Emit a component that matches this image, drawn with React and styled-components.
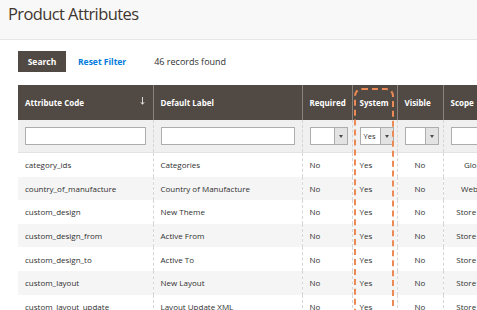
import React from "react";
import styled, { createGlobalStyle } from "styled-components";

const GlobalStyle = createGlobalStyle`
  html, body {
    margin: 0;
    padding: 0;
    background: #fff;
    overflow: hidden;
  }
  body {
    font-family: "Open Sans", "Liberation Sans", sans-serif;
    color: #303030;
    width: 477px;
    height: 310px;
  }
`;

const PageHeader = styled.div`
  height: 39px;
  background: #f8f8f8;
  border-bottom: 1px solid #e6e6e6;
  display: flex;
  align-items: center;
  padding-left: 8px;
`;

const Title = styled.h1`
  margin: 0;
  font-size: 16.5px;
  font-weight: 400;
  color: #41362f;
  letter-spacing: -0.6px;
  line-height: 1;
  margin-top: -10px;
`;

const Main = styled.div`
  width: 640px;
  padding-left: 18px;
`;

const Toolbar = styled.div`
  display: flex;
  align-items: center;
  margin-top: 11px;
  height: 21px;
  font-size: 8.5px;
`;

const SearchButton = styled.button`
  height: 21px;
  width: 48px;
  padding: 0;
  border: none;
  background: #514943;
  color: #fff;
  font-family: inherit;
  font-size: 8.5px;
  font-weight: 700;
`;

const ResetLink = styled.span`
  margin-left: 12px;
  color: #007bdb;
  font-weight: 700;
`;

const Records = styled.span`
  margin-left: 28px;
  font-size: 9px;
  color: #303030;
`;

const Spacer = styled.div`
  flex: 1;
`;

const RightBox = styled.div`
  width: 150px;
  height: 18px;
  border: 1px solid #adadad;
  background: #fff;
  margin-top: 1px;
`;

const TableWrap = styled.div`
  position: relative;
  margin-top: 13px;
`;

const Table = styled.table`
  border-collapse: collapse;
  table-layout: fixed;
  width: 622px;
  font-size: 8px;
`;

const HeadCell = styled.th`
  height: 35px;
  padding: 0 7px;
  background: #514943;
  color: #fff;
  font-weight: 700;
  text-align: left;
  border-left: 1px solid #8a827c;
  position: relative;
  &:first-child {
    border-left: none;
  }
`;

const SortArrow = styled.svg`
  position: absolute;
  right: 8px;
  top: 12px;
`;

const FilterCell = styled.td`
  height: 32px;
  padding: 0 7px;
  background: #f0f0f0;
  border-left: 1px dashed #d6d6d6;
  border-bottom: 1px solid #e3e3e3;
  &:first-child {
    border-left: none;
  }
`;

const TextInput = styled.div`
  height: 16px;
  border: 1px solid #adadad;
  background: #fff;
`;

const Select = styled.div`
  width: ${(p) => p.$w}px;
  height: 16px;
  border: 1px solid #adadad;
  background: #fff;
  display: flex;
  align-items: center;
`;

const SelectValue = styled.span`
  flex: 1;
  padding-left: 3px;
  font-size: 7.5px;
  color: #303030;
`;

const SelectArrow = styled.span`
  width: 12px;
  height: 100%;
  background: #e3e3e3;
  border-left: 1px solid #adadad;
  display: flex;
  align-items: center;
  justify-content: center;
  &::after {
    content: "";
    border-left: 2.5px solid transparent;
    border-right: 2.5px solid transparent;
    border-top: 3px solid #514943;
  }
`;

const Row = styled.tr`
  background: ${(p) => (p.$alt ? "#f5f5f5" : "#fff")};
`;

const Cell = styled.td`
  height: 23.6px;
  padding: 0 7px;
  text-align: ${(p) => p.$align || "left"};
  border-left: 1px dashed #d6d6d6;
  white-space: nowrap;
  overflow: hidden;
  &:first-child {
    border-left: none;
  }
`;

const Highlight = styled.div`
  position: absolute;
  left: 336px;
  top: 3px;
  width: 36px;
  height: 300px;
  border: 2px dashed #ec8a55;
  border-radius: 8px;
  pointer-events: none;
`;

const columns = [
  { title: "Attribute Code", width: 135 },
  { title: "Default Label", width: 149 },
  { title: "Required", width: 50 },
  { title: "System", width: 45 },
  { title: "Visible", width: 46 },
  { title: "Scope", width: 66 },
  { title: "Searchable", width: 131 },
];

const rows = [
  ["category_ids", "Categories", "No", "Yes", "No", "Global"],
  ["country_of_manufacture", "Country of Manufacture", "No", "Yes", "No", "Website"],
  ["custom_design", "New Theme", "No", "Yes", "No", "Store View"],
  ["custom_design_from", "Active From", "No", "Yes", "No", "Store View"],
  ["custom_design_to", "Active To", "No", "Yes", "No", "Store View"],
  ["custom_layout", "New Layout", "No", "Yes", "No", "Store View"],
  ["custom_layout_update", "Layout Update XML", "No", "Yes", "No", "Store View"],
];

export default function App() {
  return (
    <>
      <GlobalStyle />
      <PageHeader>
        <Title>Product Attributes</Title>
      </PageHeader>
      <Main>
        <Toolbar>
          <SearchButton>Search</SearchButton>
          <ResetLink>Reset Filter</ResetLink>
          <Records>46 records found</Records>
          <Spacer />
          <RightBox />
        </Toolbar>
        <TableWrap>
          <Table>
            <colgroup>
              {columns.map((c) => (
                <col key={c.title} style={{ width: c.width }} />
              ))}
            </colgroup>
            <thead>
              <tr>
                {columns.map((c, i) => (
                  <HeadCell key={c.title}>
                    {c.title}
                    {i === 0 && (
                      <SortArrow width="5" height="8" viewBox="0 0 5 8">
                        <path d="M2.5 0 V7 M0.8 5.2 L2.5 7.3 L4.2 5.2" stroke="#fff" strokeWidth="0.8" fill="none" />
                      </SortArrow>
                    )}
                  </HeadCell>
                ))}
              </tr>
              <tr>
                <FilterCell><TextInput /></FilterCell>
                <FilterCell><TextInput /></FilterCell>
                <FilterCell>
                  <Select $w={36}><SelectValue /><SelectArrow /></Select>
                </FilterCell>
                <FilterCell>
                  <Select $w={32}><SelectValue>Yes</SelectValue><SelectArrow /></Select>
                </FilterCell>
                <FilterCell>
                  <Select $w={32}><SelectValue /><SelectArrow /></Select>
                </FilterCell>
                <FilterCell><TextInput /></FilterCell>
                <FilterCell><TextInput /></FilterCell>
              </tr>
            </thead>
            <tbody>
              {rows.map((r, i) => (
                <Row key={r[0]} $alt={i % 2 === 1}>
                  <Cell>{r[0]}</Cell>
                  <Cell>{r[1]}</Cell>
                  <Cell>{r[2]}</Cell>
                  <Cell>{r[3]}</Cell>
                  <Cell $align="center">{r[4]}</Cell>
                  <Cell $align="center">{r[5]}</Cell>
                  <Cell />
                </Row>
              ))}
            </tbody>
          </Table>
          <Highlight />
        </TableWrap>
      </Main>
    </>
  );
}
